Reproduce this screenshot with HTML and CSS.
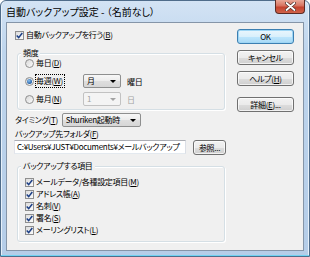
FILE: index.html
```html
<!DOCTYPE html>
<html lang="ja">
<head>
  <meta charset="UTF-8">
  <title>自動バックアップ設定</title>
  <link rel="stylesheet" href="styles.css">
</head>
<body>

  <div class="window">
    <div class="titlebar">
      <span class="title">自動バックアップ設定 - （名前なし）</span>
      <span class="close">
        <svg width="11" height="9" viewBox="0 0 11 9">
          <path d="M1.5 1 L9.5 8 M9.5 1 L1.5 8" stroke="#4a2a24" stroke-width="3.2" stroke-linecap="round"/>
          <path d="M1.5 1 L9.5 8 M9.5 1 L1.5 8" stroke="#ffffff" stroke-width="1.8" stroke-linecap="round"/>
        </svg>
      </span>
    </div>

    <div class="client">
      <div class="main">
        <div class="check top-check">
          <span class="box"><svg width="7" height="7" viewBox="0 0 6 6"><path d="M0.6 3 L2.3 4.8 L5.4 0.8" fill="none" stroke="#1c3f86" stroke-width="1.3"/></svg></span>
          <span>自動バックアップを行う(<u>B</u>)</span>
        </div>

        <div class="group freq">
          <div class="legend">頻度</div>
          <div class="freq-row">
            <div class="opt"><span class="radio"></span><span>毎日(<u>D</u>)</span></div>
          </div>
          <div class="freq-row">
            <div class="opt"><span class="radio on"></span><span class="focus">毎週(<u>W</u>)</span></div>
            <div class="combo"><span class="value">月</span><span class="arrow"></span></div>
            <span class="unit">曜日</span>
          </div>
          <div class="freq-row">
            <div class="opt"><span class="radio"></span><span>毎月(<u>N</u>)</span></div>
            <div class="combo disabled"><span class="value">1</span><span class="arrow"></span></div>
            <span class="unit disabled-text">日</span>
          </div>
        </div>

        <div class="timing-row">
          <span class="label">タイミング(<u>T</u>)</span>
          <div class="combo timing"><span class="value">Shuriken起動時</span><span class="arrow"></span></div>
        </div>

        <div class="label folder-label">バックアップ先フォルダ(<u>F</u>)</div>
        <div class="folder-row">
          <div class="textbox">C:¥Users¥JUST¥Documents¥メールバックアップ</div>
          <div class="btn small">参照...</div>
        </div>

        <div class="group items">
          <div class="legend">バックアップする項目</div>
          <div class="group-body">
            <div class="check">
              <span class="box"><svg width="7" height="7" viewBox="0 0 6 6"><path d="M0.6 3 L2.3 4.8 L5.4 0.8" fill="none" stroke="#1c3f86" stroke-width="1.3"/></svg></span>
              <span>メールデータ/各種設定項目(<u>M</u>)</span>
            </div>
            <div class="check">
              <span class="box"><svg width="7" height="7" viewBox="0 0 6 6"><path d="M0.6 3 L2.3 4.8 L5.4 0.8" fill="none" stroke="#1c3f86" stroke-width="1.3"/></svg></span>
              <span>アドレス帳(<u>A</u>)</span>
            </div>
            <div class="check">
              <span class="box"><svg width="7" height="7" viewBox="0 0 6 6"><path d="M0.6 3 L2.3 4.8 L5.4 0.8" fill="none" stroke="#1c3f86" stroke-width="1.3"/></svg></span>
              <span>名刺(<u>V</u>)</span>
            </div>
            <div class="check">
              <span class="box"><svg width="7" height="7" viewBox="0 0 6 6"><path d="M0.6 3 L2.3 4.8 L5.4 0.8" fill="none" stroke="#1c3f86" stroke-width="1.3"/></svg></span>
              <span>署名(<u>S</u>)</span>
            </div>
            <div class="check">
              <span class="box"><svg width="7" height="7" viewBox="0 0 6 6"><path d="M0.6 3 L2.3 4.8 L5.4 0.8" fill="none" stroke="#1c3f86" stroke-width="1.3"/></svg></span>
              <span>メーリングリスト(<u>L</u>)</span>
            </div>
          </div>
        </div>
      </div>

      <div class="buttons">
        <div class="btn default">OK</div>
        <div class="btn">キャンセル</div>
        <div class="btn">ヘルプ(<u>H</u>)</div>
        <div class="btn detail">詳細(<u>E</u>)...</div>
      </div>
    </div>
  </div>

</body>
</html>
```

FILE: styles.css
```css
body {
  margin: 0;
  font-family: "Noto Sans CJK JP", "Noto Sans", sans-serif;
  font-feature-settings: "palt";
  font-size: 8px;
  letter-spacing: -0.3px;
  color: #000;
  background: #ffffff;
}

.window {
  width: 310px;
  height: 257px;
  box-sizing: border-box;
  border: 1px solid #4f6c8a;
  border-radius: 6px 6px 0 0;
  padding: 0 5px 5px 5px;
  background: linear-gradient(180deg, #d3e3f4 0%, #bed5ed 20%, #b5cde8 100%);
  box-shadow: inset 0 -1px 0 #6fd3f2, inset 1px 0 0 #e6f0fa, inset -1px 0 0 #e6f0fa;
  display: flex;
  flex-direction: column;
}

.titlebar {
  height: 21px;
  display: flex;
  align-items: flex-start;
}

.title {
  font-size: 10px;
  letter-spacing: 0;
  line-height: 12px;
  margin-top: 5px;
  color: #000;
}

.close {
  margin-left: auto;
  margin-top: -1px;
  margin-right: -1px;
  width: 30px;
  height: 14px;
  box-sizing: border-box;
  border: 1px solid #5b2b24;
  border-top: none;
  border-radius: 0 0 4px 4px;
  background: linear-gradient(180deg, #e9a898 0%, #d7725f 45%, #c4422e 55%, #d0634a 100%);
  display: flex;
  align-items: center;
  justify-content: center;
}

.close svg {
  display: block;
}

.client {
  flex: 1;
  background: #f0f0f0;
  border: 1px solid #8595a8;
  display: flex;
}

.main {
  width: 222px;
  padding-left: 7px;
}

.check {
  display: flex;
  align-items: center;
  height: 12px;
  line-height: 12px;
}

.top-check {
  margin-top: 6px;
  margin-left: 1px;
}

.box {
  width: 9px;
  height: 9px;
  box-sizing: border-box;
  border: 1px solid #8f8f8f;
  background: linear-gradient(135deg, #dcdcdc, #fbfbfb);
  margin-right: 2px;
  display: flex;
  align-items: center;
  justify-content: center;
}

.box svg {
  display: block;
}

u {
  text-decoration-thickness: 1px;
  text-underline-offset: 1px;
}

.group {
  border: 1px solid #d5dfe5;
  border-radius: 3px;
  box-shadow: inset 1px 1px 0 #ffffff, 1px 1px 0 #ffffff;
  margin-left: 3px;
  width: 208px;
  box-sizing: border-box;
}

.legend {
  width: fit-content;
  height: 12px;
  line-height: 12px;
  margin: -7px 0 -5px 3px;
  padding: 0 2px;
  background: #f0f0f0;
}

.freq {
  margin-top: 12px;
  padding-bottom: 1px;
}

.freq-row {
  height: 18px;
  display: grid;
  grid-template-columns: 65px 38px auto;
  align-items: center;
}

.opt {
  display: flex;
  align-items: center;
  padding-left: 7px;
  line-height: 12px;
}

.radio {
  width: 9px;
  height: 9px;
  box-sizing: border-box;
  border: 1px solid #8f8f8f;
  border-radius: 50%;
  background: linear-gradient(135deg, #d8d8d8, #fbfbfb);
  margin-right: 2px;
  display: flex;
  align-items: center;
  justify-content: center;
}

.radio.on::after {
  content: "";
  width: 5px;
  height: 5px;
  border-radius: 50%;
  background: radial-gradient(circle at 40% 35%, #8fc4f0, #1f5ea8 70%);
}

.focus {
  outline: 1px dotted #000;
  padding: 0 1px 0 0;
}

.combo {
  height: 14px;
  box-sizing: border-box;
  border: 1px solid #8e8f8f;
  border-radius: 2px;
  background: linear-gradient(180deg, #f7f7f7 0%, #ececec 50%, #dedede 51%, #d6d6d6 100%);
  display: flex;
  align-items: center;
  padding: 0 4px 0 3px;
  line-height: 12px;
}

.combo .arrow {
  margin-left: auto;
  width: 0;
  height: 0;
  border-left: 3px solid transparent;
  border-right: 3px solid transparent;
  border-top: 3px solid #000;
}

.combo.disabled {
  border-color: #c2c2c2;
  background: #f4f4f4;
  color: #a3a3a3;
}

.combo.disabled .arrow {
  border-top-color: #a3a3a3;
}

.unit {
  margin-left: 6px;
}

.disabled-text {
  color: #a3a3a3;
}

.label {
  margin-left: 1px;
  line-height: 12px;
}

.timing-row {
  margin-top: 3px;
  display: flex;
  align-items: center;
  height: 14px;
}

.timing {
  margin-left: 4px;
  width: 79px;
}

.folder-label {
  margin-top: 1px;
  height: 12px;
}

.folder-row {
  display: flex;
  align-items: center;
  height: 14px;
}

.textbox {
  width: 172px;
  height: 14px;
  box-sizing: border-box;
  border: 1px solid #abadb3;
  border-color: #abadb3 #dbdfe6 #e3e9ef #e2e3ea;
  background: #ffffff;
  line-height: 12px;
  padding-left: 2px;
  white-space: nowrap;
  overflow: hidden;
}

.items {
  margin-top: 12px;
}

.group-body {
  padding: 9px 0 5px 7px;
}

.buttons {
  margin-left: auto;
  margin-right: 9px;
  width: 57px;
  padding-top: 6px;
  display: flex;
  flex-direction: column;
  gap: 6px;
}

.btn {
  height: 15px;
  box-sizing: border-box;
  border: 1px solid #707070;
  border-radius: 3px;
  background: linear-gradient(180deg, #f2f2f2 0%, #ebebeb 50%, #dddddd 51%, #cfcfcf 100%);
  box-shadow: inset 0 0 0 1px rgba(255, 255, 255, 0.7);
  text-align: center;
  line-height: 13px;
}

.btn.default {
  border-color: #3c7fb1;
  background: linear-gradient(180deg, #eaf6fd 0%, #d9f0fc 50%, #bee6fd 51%, #a7d9f5 100%);
  box-shadow: inset 0 0 0 1px #9ed6f5;
}

.btn.detail {
  margin-top: 5px;
}

.btn.small {
  width: 33px;
  margin-left: 7px;
}
```
